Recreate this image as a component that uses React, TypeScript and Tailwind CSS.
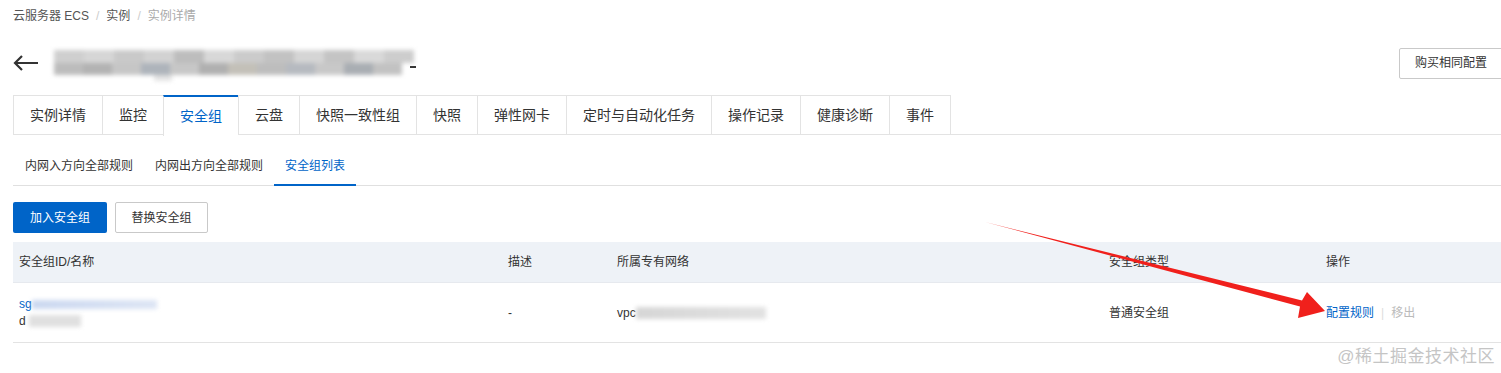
import React from 'react';

const tabs = ['实例详情', '监控', '安全组', '云盘', '快照一致性组', '快照', '弹性网卡', '定时与自动化任务', '操作记录', '健康诊断', '事件'];
const subTabs = ['内网入方向全部规则', '内网出方向全部规则', '安全组列表'];

// mottled greys standing in for the pixelated instance name
const titleTop = ['#cfcfcf', '#d6d6d6', '#c9c9c9', '#d2d2d2', '#bdbdbd', '#d8d8d8', '#cbcbcb', '#c2c2c2', '#d5d5d5', '#c4c4c4', '#d9d9d9', '#cdcdcd'];
const titleBottom = ['#bcbcbc', '#b3b3b3', '#c6c6c6', '#aeb4bb', '#c7c7c7', '#b0b0b0', '#c3c0b8', '#bdbdbd', '#b6bac0', '#c8c8c8', '#a9aeb3', '#c2c2c2'];

const Blur = ({ className }: { className: string }) => (
  <span className={`inline-block blur-[2px] ${className}`} />
);

const App = () => {
  return (
    <div
      className="relative w-[1501px] h-[373px] bg-white text-[12px] text-[#333] overflow-hidden"
      style={{ fontFamily: '"Liberation Sans", "Noto Sans CJK SC", sans-serif' }}
    >
      <div className="pl-[13px]">
        {/* Breadcrumb */}
        <div className="h-[32px] flex items-center gap-[7px] text-[#555]">
          <span>云服务器 ECS</span>
          <span className="text-[#ccc]">/</span>
          <span>实例</span>
          <span className="text-[#ccc]">/</span>
          <span className="text-[#aaa]">实例详情</span>
        </div>

        {/* Title */}
        <div className="h-[42px] mt-[12px] flex items-center justify-between">
          <div className="flex items-center">
            <svg width="26" height="16" viewBox="0 0 26 16" className="mt-[-4px]">
              <path d="M25 8H2M9 1L2 8l7 7" fill="none" stroke="#333" strokeWidth="2.2" />
            </svg>
            <div className="relative ml-[15px] w-[370px] h-[38px] blur-[2px]">
              <div className="absolute left-0 top-[4px] flex">
                {titleTop.map((c, i) => (
                  <span key={i} className="w-[30px] h-[13px]" style={{ background: c }} />
                ))}
              </div>
              <div className="absolute left-0 top-[17px] flex">
                {titleBottom.map((c, i) => (
                  <span key={i} className="w-[29px] h-[12px]" style={{ background: c }} />
                ))}
              </div>
              <span className="absolute left-[100px] top-[29px] w-[18px] h-[6px] bg-[#e3e3e3]" />
            </div>
            <span className="ml-[-14px] mt-[4px] w-[6px] h-[2px] bg-[#333]" />
          </div>
          <button className="h-[31px] px-[15px] border border-[#c9c9c9] rounded-[2px] bg-white text-[#333] mr-[-2px] mt-[-4px]">
            购买相同配置
          </button>
        </div>

        {/* Tabs */}
        <div className="mt-[9px] flex border-b border-[#e3e3e3] h-[40px]">
          {tabs.map((t, i) => {
            const active = t === '安全组';
            return (
              <div
                key={t}
                className={`px-[16px] flex items-center text-[14px] border-l border-[#e3e3e3] ${i === tabs.length - 1 ? 'border-r' : ''} ${
                  active
                    ? 'border-t-2 border-t-[#0064c8] text-[#0064c8] bg-white mb-[-1px] h-[41px]'
                    : 'border-t bg-[#fff]'
                }`}
              >
                {t}
              </div>
            );
          })}
        </div>

        {/* Sub tabs */}
        <div className="mt-[16px] flex h-[35px] border-b border-[#e0e0e0]">
          {subTabs.map((t, i) => {
            const active = i === 2;
            return (
              <div
                key={t}
                className={`px-[11px] flex items-center pb-[4px] ${i === 0 ? 'ml-[1px]' : ''} ${
                  active ? 'text-[#0064c8] border-b-2 border-[#0064c8] mb-[-1px]' : 'text-[#333]'
                }`}
              >
                {t}
              </div>
            );
          })}
        </div>

        {/* Actions */}
        <div className="mt-[16px] flex gap-[8px]">
          <button className="h-[31px] w-[94px] bg-[#0064c8] text-white rounded-[2px]">加入安全组</button>
          <button className="h-[31px] w-[93px] border border-[#c9c9c9] rounded-[2px] bg-white text-[#333]">替换安全组</button>
        </div>

        {/* Table */}
        <div className="mt-[9px]">
          <div className="grid grid-cols-[489px_109px_492px_217px_1fr] h-[41px] items-center bg-[#eef2f7] border-b border-[#e6e9ee]">
            <div className="px-[6px]">安全组ID/名称</div>
            <div className="px-[6px]">描述</div>
            <div className="px-[6px]">所属专有网络</div>
            <div className="px-[6px]">安全组类型</div>
            <div className="px-[6px]">操作</div>
          </div>
          <div className="grid grid-cols-[489px_109px_492px_217px_1fr] h-[60px] items-center border-b border-[#e3e3e3]">
            <div className="px-[6px] leading-[17px]">
              <div className="flex items-center">
                <span className="text-[#0064c8]">sg</span>
                <Blur className="w-[125px] h-[9px] bg-gradient-to-r from-[#cbd8f0] to-[#dde5f4]" />
              </div>
              <div className="flex items-center">
                <span>d</span>
                <Blur className="ml-[3px] w-[52px] h-[12px] bg-[#e0e0e0]" />
              </div>
            </div>
            <div className="px-[6px]">-</div>
            <div className="px-[6px] flex items-center">
              <span>vpc</span>
              <Blur className="w-[130px] h-[12px] bg-gradient-to-r from-[#d6d6d6] to-[#e2e2e2]" />
            </div>
            <div className="px-[6px]">普通安全组</div>
            <div className="px-[6px] flex items-center gap-[7px]">
              <span className="text-[#0064c8]">配置规则</span>
              <span className="text-[#ddd]">|</span>
              <span className="text-[#bbb]">移出</span>
            </div>
          </div>
        </div>
      </div>

      {/* Annotation arrow */}
      <svg className="absolute left-0 top-0 pointer-events-none" width="1501" height="373">
        <polygon
          points="985,222 1302,300.5 1307,292 1325,311 1298,318 1300,306.5"
          fill="#f0201c"
        />
      </svg>

      {/* Watermark */}
      <div className="absolute right-[6px] bottom-[4px] text-[17px] text-[#c5c5c5] tracking-[0.5px]">
        @稀土掘金技术社区
      </div>
    </div>
  );
};

export default App;
